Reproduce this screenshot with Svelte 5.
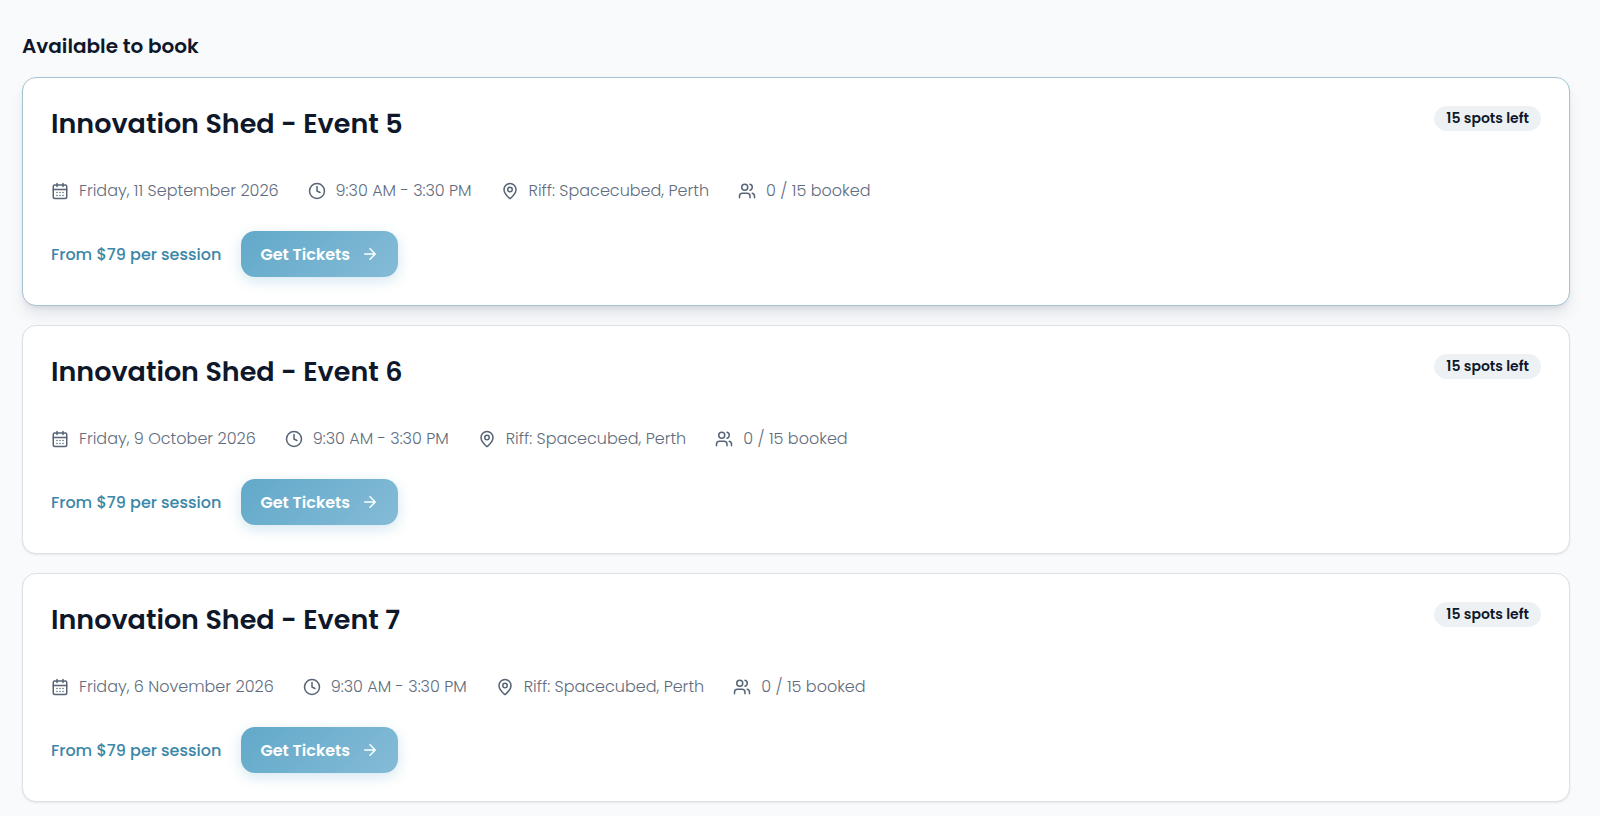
<script lang="ts">
  type Session = {
    name: string
    date: string
    time: string
    place: string
    capacity: number
    booked: number
  }

  const time = '9:30 AM - 3:30 PM'
  const place = 'Riff: Spacecubed, Perth'

  const sessions: Session[] = [
    { name: 'Innovation Shed - Event 5', date: 'Friday, 11 September 2026', time, place, capacity: 15, booked: 0 },
    { name: 'Innovation Shed - Event 6', date: 'Friday, 9 October 2026', time, place, capacity: 15, booked: 0 },
    { name: 'Innovation Shed - Event 7', date: 'Friday, 6 November 2026', time, place, capacity: 15, booked: 0 },
  ]

  let selected = $state(0)
</script>

{#snippet calendarIcon()}
  <svg class="icon" viewBox="0 0 24 24" aria-hidden="true">
    <path d="M8 2v4M16 2v4M3 10h18" />
    <rect x="3" y="4" width="18" height="18" rx="2" />
    <path d="M8 14h.01M12 14h.01M16 14h.01M8 18h.01M12 18h.01M16 18h.01" />
  </svg>
{/snippet}

{#snippet clockIcon()}
  <svg class="icon" viewBox="0 0 24 24" aria-hidden="true">
    <circle cx="12" cy="12" r="10" />
    <path d="M12 6v6l4 2" />
  </svg>
{/snippet}

{#snippet pinIcon()}
  <svg class="icon" viewBox="0 0 24 24" aria-hidden="true">
    <path d="M20 10c0 4.993-5.539 10.193-7.399 11.799a1 1 0 0 1-1.202 0C9.539 20.193 4 14.993 4 10a8 8 0 0 1 16 0" />
    <circle cx="12" cy="10" r="3" />
  </svg>
{/snippet}

{#snippet usersIcon()}
  <svg class="icon" viewBox="0 0 24 24" aria-hidden="true">
    <path d="M16 21v-2a4 4 0 0 0-4-4H6a4 4 0 0 0-4 4v2" />
    <circle cx="9" cy="7" r="4" />
    <path d="M22 21v-2a4 4 0 0 0-3-3.87M16 3.13a4 4 0 0 1 0 7.75" />
  </svg>
{/snippet}

<main>
  <h2>Available to book</h2>
  <div class="list">
    {#each sessions as s, i}
      <article class="card" class:active={selected === i}>
        <header>
          <h3>{s.name}</h3>
          <span class="badge">{s.capacity - s.booked} spots left</span>
        </header>
        <ul class="meta">
          <li>{@render calendarIcon()}{s.date}</li>
          <li>{@render clockIcon()}{s.time}</li>
          <li>{@render pinIcon()}{s.place}</li>
          <li>{@render usersIcon()}{s.booked} / {s.capacity} booked</li>
        </ul>
        <div class="actions">
          <span class="price">From $79 per session</span>
          <button type="button" onclick={() => (selected = i)}>
            Get Tickets
            <svg class="icon" viewBox="0 0 24 24" aria-hidden="true">
              <path d="M5 12h14M12 5l7 7-7 7" />
            </svg>
          </button>
        </div>
      </article>
    {/each}
  </div>
</main>

<style>
  :global(body) {
    background: #f8fafc;
  }
  main {
    padding: 32px 30px 13px 22px;
    font-family: Poppins, Inter, 'Noto Sans', sans-serif;
    font-size: 16px;
    color: #0f172a;
  }
  h2 {
    margin: 0 0 17px;
    font-size: 20px;
    line-height: 28px;
    font-weight: 600;
  }
  .list {
    display: flex;
    flex-direction: column;
    gap: 19px;
  }
  .card {
    padding: 28px;
    background: #fff;
    border: 1px solid #dbe1e6;
    border-radius: 14px;
    box-shadow: 0 1px 2px rgba(15, 23, 42, 0.08);
  }
  .card.active {
    border-color: #a3c3d3;
    box-shadow: 0 10px 17px -3px rgba(15, 23, 42, 0.1), 0 4px 7px -3px rgba(15, 23, 42, 0.1);
  }
  header {
    display: flex;
    justify-content: space-between;
    align-items: flex-start;
    margin-bottom: 35px;
  }
  h3 {
    margin: 0;
    font-size: 27px;
    line-height: 36px;
    font-weight: 600;
  }
  .badge {
    padding: 0 12px;
    border-radius: 13px;
    background: #eef1f4;
    font-size: 14px;
    line-height: 25px;
    font-weight: 600;
  }
  .meta {
    display: flex;
    flex-wrap: wrap;
    gap: 8px 29px;
    margin: 0 0 26px;
    padding: 0;
    list-style: none;
    line-height: 28px;
    font-weight: 300;
    color: #5f6d7e;
  }
  .meta li {
    display: flex;
    align-items: center;
    gap: 10px;
  }
  .icon {
    width: 18px;
    height: 18px;
    flex: none;
    fill: none;
    stroke: currentColor;
    stroke-width: 2;
    stroke-linecap: round;
    stroke-linejoin: round;
  }
  .meta .icon {
    color: #566476;
  }
  .actions {
    display: flex;
    align-items: center;
    gap: 20px;
  }
  .price {
    font-weight: 500;
    color: #3a87a8;
  }
  button {
    display: inline-flex;
    align-items: center;
    gap: 11px;
    height: 46px;
    padding: 0 19px;
    border: 0;
    border-radius: 14px;
    background: linear-gradient(135deg, #62a9c9, #84bbd7);
    box-shadow: 0 4px 14px rgba(98, 169, 201, 0.28);
    color: #fff;
    font: inherit;
    font-weight: 600;
    cursor: pointer;
  }
</style>
